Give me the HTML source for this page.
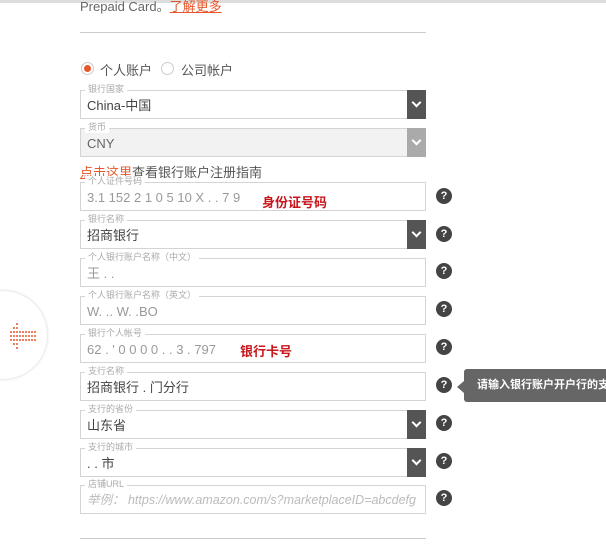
<!DOCTYPE html>
<html><head><meta charset="utf-8"><style>
*{margin:0;padding:0;box-sizing:border-box}
body{width:606px;height:551px;background:#fff;position:relative;overflow:hidden;font-family:"Liberation Sans","Noto Sans CJK SC",sans-serif;color:#333}
.a{position:absolute}
.f{position:absolute;left:80px;width:346px;height:29px;border:1px solid #d4d4d4;background:#fff}
.f .l{position:absolute;left:4px;top:-7px;font-size:9px;color:#aaa;background:#fff;padding:0 3px;line-height:11px;white-space:nowrap}
.f .v{position:absolute;left:6px;top:7px;font-size:13px;line-height:15px;color:#444;white-space:nowrap}
.f .b{position:absolute;right:-1px;top:-1px;width:19px;height:29px;background:#555}
.f .b:after{content:"";position:absolute;left:6px;top:9px;width:5px;height:5px;border-right:2px solid #fff;border-bottom:2px solid #fff;transform:rotate(45deg)}
.q{position:absolute;left:436px;width:16px;height:16px;border-radius:50%;background:#444;color:#fff;font-size:11px;font-weight:bold;text-align:center;line-height:16px}
.red{position:absolute;color:#c8161d;font-weight:bold;font-size:13px}
</style></head><body>
<div class="a" style="left:0;top:0;width:606px;height:3px;background:#ddd"></div>
<div class="a" style="left:80px;top:0;font-size:13px;color:#666;line-height:14px">Prepaid Card。<span style="color:#e8572b;text-decoration:underline">了解更多</span></div>
<div class="a" style="left:80px;top:32px;width:346px;height:1px;background:#ccc"></div>
<div class="a" style="left:81px;top:62px;width:13px;height:13px;border-radius:50%;border:1px solid #ccc;background:#fff"><div style="position:absolute;left:2px;top:2px;width:7px;height:7px;border-radius:50%;background:#e8572b"></div></div>
<div class="a" style="left:100px;top:60px;font-size:13px;color:#555">个人账户</div>
<div class="a" style="left:161px;top:62px;width:13px;height:13px;border-radius:50%;border:1px solid #ccc"></div>
<div class="a" style="left:181px;top:60px;font-size:13px;color:#555">公司帐户</div>

<div class="f" style="top:90px"><span class="l">银行国家</span><span class="v">China-中国</span><div class="b"></div></div>
<div class="f" style="top:128px;background:#f2f2f2"><span class="l">货币</span><span class="v" style="color:#666">CNY</span><div class="b" style="background:#aaa"></div></div>
<div class="a" style="left:80px;top:162px;font-size:13px;color:#555"><span style="color:#e8572b;text-decoration:underline">点击这里</span>查看银行账户注册指南</div>
<div class="f" style="top:182px"><span class="l">个人证件号码</span><span class="v" style="color:#999">3.1 152 2 1 0 5  10 X  .  . 7 9</span></div>
<div class="red" style="left:262px;top:192px">身份证号码</div>
<div class="f" style="top:220px"><span class="l">银行名称</span><span class="v">招商银行</span><div class="b"></div></div>
<div class="f" style="top:258px"><span class="l">个人银行账户名称（中文）</span><span class="v" style="color:#999">王 . .</span></div>
<div class="f" style="top:296px"><span class="l">个人银行账户名称（英文）</span><span class="v" style="color:#999">W.  .. W. .BO</span></div>
<div class="f" style="top:334px"><span class="l">银行个人帐号</span><span class="v" style="color:#999">62 . ' 0 0 0 0 . . 3 . 797</span></div>
<div class="red" style="left:240px;top:341px">银行卡号</div>
<div class="f" style="top:372px"><span class="l">支行名称</span><span class="v">招商银行 . 门分行</span></div>
<div class="f" style="top:410px"><span class="l">支行的省份</span><span class="v">山东省</span><div class="b"></div></div>
<div class="f" style="top:448px"><span class="l">支行的城市</span><span class="v">. . 市</span><div class="b"></div></div>
<div class="f" style="top:485px"><span class="l">店铺URL</span><span class="v" style="color:#bbb;font-style:italic;font-size:12.5px">举例： https://www.amazon.com/s?marketplaceID=abcdefg</span></div>
<div class="a" style="left:80px;top:538px;width:346px;height:1px;background:#ccc"></div>

<div class="q" style="top:188px">?</div>
<div class="q" style="top:226px">?</div>
<div class="q" style="top:263px">?</div>
<div class="q" style="top:301px">?</div>
<div class="q" style="top:339px">?</div>
<div class="q" style="top:377px">?</div>
<div class="q" style="top:415px">?</div>
<div class="q" style="top:453px">?</div>
<div class="q" style="top:490px">?</div>

<div class="a" style="left:457px;top:381px;width:0;height:0;border-top:6px solid transparent;border-bottom:6px solid transparent;border-right:7px solid #666"></div>
<div class="a" style="left:464px;top:369px;width:150px;height:33px;background:#666;border-radius:3px;color:#fff;font-size:11px;font-weight:bold;line-height:33px;padding-left:13px;white-space:nowrap">请输入银行账户开户行的支</div>

<div class="a" style="left:-41px;top:291px;width:88px;height:88px;border-radius:50%;background:#fff;box-shadow:0 0 3px rgba(0,0,0,.2)"></div>
<svg class="a" style="left:8px;top:322px" width="30" height="28" viewBox="0 0 30 28" fill="#e8572b">
<g>
<circle cx="9" cy="2" r="1"/>
<circle cx="6" cy="6" r="1"/><circle cx="9" cy="6" r="1"/>
<circle cx="3" cy="10" r="1"/><circle cx="6" cy="10" r="1"/><circle cx="9" cy="10" r="1"/><circle cx="12" cy="10" r="1"/><circle cx="15" cy="10" r="1"/><circle cx="18" cy="10" r="1"/><circle cx="21" cy="10" r="1"/><circle cx="24" cy="10" r="1"/><circle cx="27" cy="10" r="1"/>
<circle cx="3" cy="14" r="1"/><circle cx="6" cy="14" r="1"/><circle cx="9" cy="14" r="1"/><circle cx="12" cy="14" r="1"/><circle cx="15" cy="14" r="1"/><circle cx="18" cy="14" r="1"/><circle cx="21" cy="14" r="1"/><circle cx="24" cy="14" r="1"/><circle cx="27" cy="14" r="1"/>
<circle cx="3" cy="18" r="1"/><circle cx="6" cy="18" r="1"/><circle cx="9" cy="18" r="1"/><circle cx="12" cy="18" r="1"/><circle cx="15" cy="18" r="1"/><circle cx="18" cy="18" r="1"/><circle cx="21" cy="18" r="1"/><circle cx="24" cy="18" r="1"/><circle cx="27" cy="18" r="1"/>
<circle cx="6" cy="22" r="1"/><circle cx="9" cy="22" r="1"/>
<circle cx="9" cy="26" r="1"/>
</g></svg>
</body></html>
